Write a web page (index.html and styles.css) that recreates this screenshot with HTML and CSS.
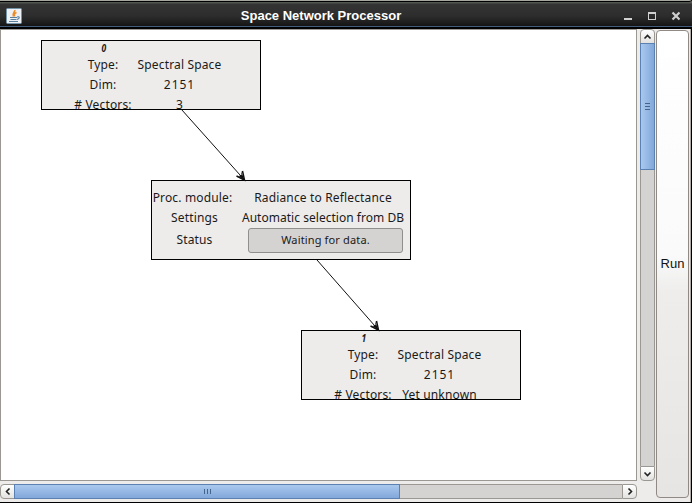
FILE: index.html
```html
<!DOCTYPE html>
<html lang="en">
<head>
<meta charset="utf-8">
<title>Space Network Processor</title>
<link rel="stylesheet" href="styles.css">
</head>
<body>
<div class="window">
  <header class="titlebar">
    <svg class="app-icon" width="16" height="16" viewBox="0 0 16 16">
      <rect x=".5" y=".5" width="15" height="15" rx="1" fill="#edf1f4" stroke="#7293a9"/>
      <path d="M8.800 2C9.500 4 5.700 5 7.400 8.500M10.500 4.500C8 5.500 8.200 6.500 8.500 8.500" fill="none" stroke="#ed8b25" stroke-width="1.600"/>
      <path d="M4 9.500h7M4.500 11.500h6M3 13.500h9M11 9c3-1 3 1.500 0 2.500" fill="none" stroke="#587f9c" stroke-width="1.100"/>
    </svg>
    <h1 class="title">Space Network Processor</h1>
    <svg class="controls" width="56" height="10" viewBox="0 0 56 10">
      <path d="M0 7h8v2H0z" fill="#d0d0d0"/>
      <path d="M24 1h8v8h-8zM25 3v5h6V3z" fill="#d0d0d0" fill-rule="evenodd"/>
      <path d="M48.500 1.500l7 7M55.500 1.500l-7 7" stroke="#d0d0d0" stroke-width="2.200"/>
    </svg>
  </header>
  <main class="content">
    <section class="scroll-pane">
      <div class="canvas">
        <div class="node source">
          <span class="index">0</span>
          <span>Type:</span><span>Spectral Space</span>
          <span>Dim:</span><span class="number">2151</span>
          <span class="vectors">#&nbsp;Vectors:</span><span>3</span>
        </div>
        <div class="node module">
          <span class="proc">Proc. module:</span><span class="wide">Radiance to Reflectance</span>
          <span class="settings">Settings</span><span class="auto">Automatic selection from DB</span>
          <span class="status-label">Status</span><span class="status">Waiting for data.</span>
        </div>
        <div class="node result">
          <span class="index">1</span>
          <span>Type:</span><span>Spectral Space</span>
          <span>Dim:</span><span class="number">2151</span>
          <span class="vectors">#&nbsp;Vectors:</span><span>Yet unknown</span>
        </div>
        <svg class="links" width="635" height="450" viewBox="1 30 635 450">
          <g fill="none" stroke="#111">
            <path d="M181.500 109.500L244.500 180M317 260L378.500 330"/>
            <path d="M242.500 171l2 9-8-4M376.500 321l2 9-8-4" stroke-width="1.500"/>
          </g>
          <path d="M241 171l3.500 9-6-4 3-1zM375 321l3.500 9-6-4 3-1z" fill="#111"/>
        </svg>
      </div>
      <div class="vbar">
        <div class="step up"><svg width="9" height="6" viewBox="0 0 9 6"><path d="M1.500 4.500l3-3 3 3"/></svg></div>
        <div class="thumb vthumb"><i></i><i></i><i></i></div>
        <div class="track"></div>
        <div class="step down"><svg width="9" height="6" viewBox="0 0 9 6"><path d="M1.500 1.500l3 3 3-3"/></svg></div>
      </div>
      <div class="hbar">
        <div class="step left"><svg width="6" height="9" viewBox="0 0 6 9"><path d="M4.500 1.500l-3 3 3 3"/></svg></div>
        <div class="thumb hthumb"><i></i><i></i><i></i></div>
        <div class="track"></div>
        <div class="step right"><svg width="6" height="9" viewBox="0 0 6 9"><path d="M1.500 1.500l3 3-3 3"/></svg></div>
      </div>
    </section>
    <button class="run" type="button">Run</button>
  </main>
</div>
</body>
</html>
```
FILE: styles.css
```css
* { box-sizing: border-box; }
body { margin: 0; background: #000; }
.window {
  width: 692px;
  height: 503px;
  display: flex;
  flex-direction: column;
  background: #000;
}
.titlebar {
  height: 29px;
  display: grid;
  grid-template-columns: 24px 1fr 74px;
  align-items: center;
  padding-top: 2px;
  border-top: 1px solid #a5a79f;
  border-radius: 0 3px 0 0;
  background: linear-gradient(#000 0 1px, #505650 1px 2px, #343434 3px, #2d2d2d 15px, #151515 25px, #445c7b 25px 26px, #000 26px);
}
.app-icon { margin-left: 6px; }
.title {
  margin: 0;
  text-align: center;
  color: #fff;
  font: bold 13px/16px "Liberation Sans", sans-serif;
}
.controls { margin-left: 6px; }
.content {
  width: 691px;
  height: 473px;
  display: flex;
  gap: 1px;
  background: #edeceb;
  border-right: 1px solid #b0aaa5;
}
.scroll-pane {
  width: 655px;
  display: grid;
  grid-template: 452px 15px / 637px 15px;
  gap: 3px;
}
.canvas {
  position: relative;
  background: #fff;
  border: 1px solid #9b9792;
}
.node {
  position: absolute;
  display: grid;
  overflow: hidden;
  background: #edeceb;
  border: 1px solid #000;
  color: #1a1a1a;
  font: 12px/20px "Noto Sans", sans-serif;
  letter-spacing: .15px;
  text-align: center;
  white-space: nowrap;
}
.source, .result {
  width: 220px;
  height: 70px;
  grid-template: 14px repeat(3, 20px) / 62px 91px;
  padding-left: 30px;
}
.source { left: 40px; top: 10px; }
.result { left: 300px; top: 300px; }
.index {
  grid-column: 1 / 2;
  padding-left: 2px;
  font: italic bold 10px/14px "Open Sans", sans-serif;
  transform: scaleX(.85);
}
.index + span { grid-column: 1; }
.vectors { margin: 0 -4px; }
.number { letter-spacing: 1px; }
.module {
  left: 150px;
  top: 150px;
  width: 260px;
  height: 80px;
  grid-template: 20px 20px 26px / 81px 177px;
  padding-top: 7px;
}
.settings, .status-label { padding-left: 4px; }
.status-label { line-height: 24px; }
.wide { padding-left: 3px; }
.auto { padding-left: 3px; letter-spacing: .03px; }
.status {
  width: 155px;
  height: 25px;
  margin-left: 15px;
  border: 1px solid #8f8f8d;
  border-radius: 3px;
  background: #d4d3d1;
  font-size: 11px;
  line-height: 22px;
}
.links { position: absolute; left: 0; top: 0; }
.vbar, .hbar { display: flex; }
.vbar { flex-direction: column; }
.step {
  flex: none;
  display: grid;
  place-items: center;
  width: 15px;
  height: 15px;
  border: 1px solid #9b9792;
  background: linear-gradient(#fff, #e3e2e0);
}
.step path { fill: none; stroke: #222; stroke-width: 1.6; }
.up { border-radius: 4px 4px 0 0; }
.down { border-radius: 0 0 4px 4px; }
.left { border-radius: 4px 0 0 4px; }
.right { border-radius: 0 4px 4px 0; }
.thumb {
  flex: none;
  display: flex;
  align-items: center;
  justify-content: center;
  gap: 2px;
  border: 1px solid #5b80b2;
}
.vthumb {
  height: 127px;
  margin-top: -1px;
  flex-direction: column;
  background: linear-gradient(90deg, #a9c8ed, #82a8da);
}
.vthumb i { width: 5px; height: 1px; background: #45648c; }
.hthumb {
  width: 386px;
  margin-left: -1px;
  background: linear-gradient(#a9c8ed, #82a8da);
}
.hthumb i { width: 1px; height: 5px; background: #45648c; }
.track { flex: 1; background: #d4d3d1; }
.vbar .track { border: solid #9b9792; border-width: 0 1px; }
.hbar .track { border: solid #9b9792; border-width: 1px 0; }
.run {
  width: 33px;
  height: 468px;
  margin-top: 1px;
  padding: 0;
  border: 1px solid #8f8a86;
  border-radius: 4px;
  background: linear-gradient(#fff, #fafafa 48%, #eeedec 56%, #e6e5e3);
  color: #111;
  font: 13px/16px "Liberation Sans", sans-serif;
}
```
